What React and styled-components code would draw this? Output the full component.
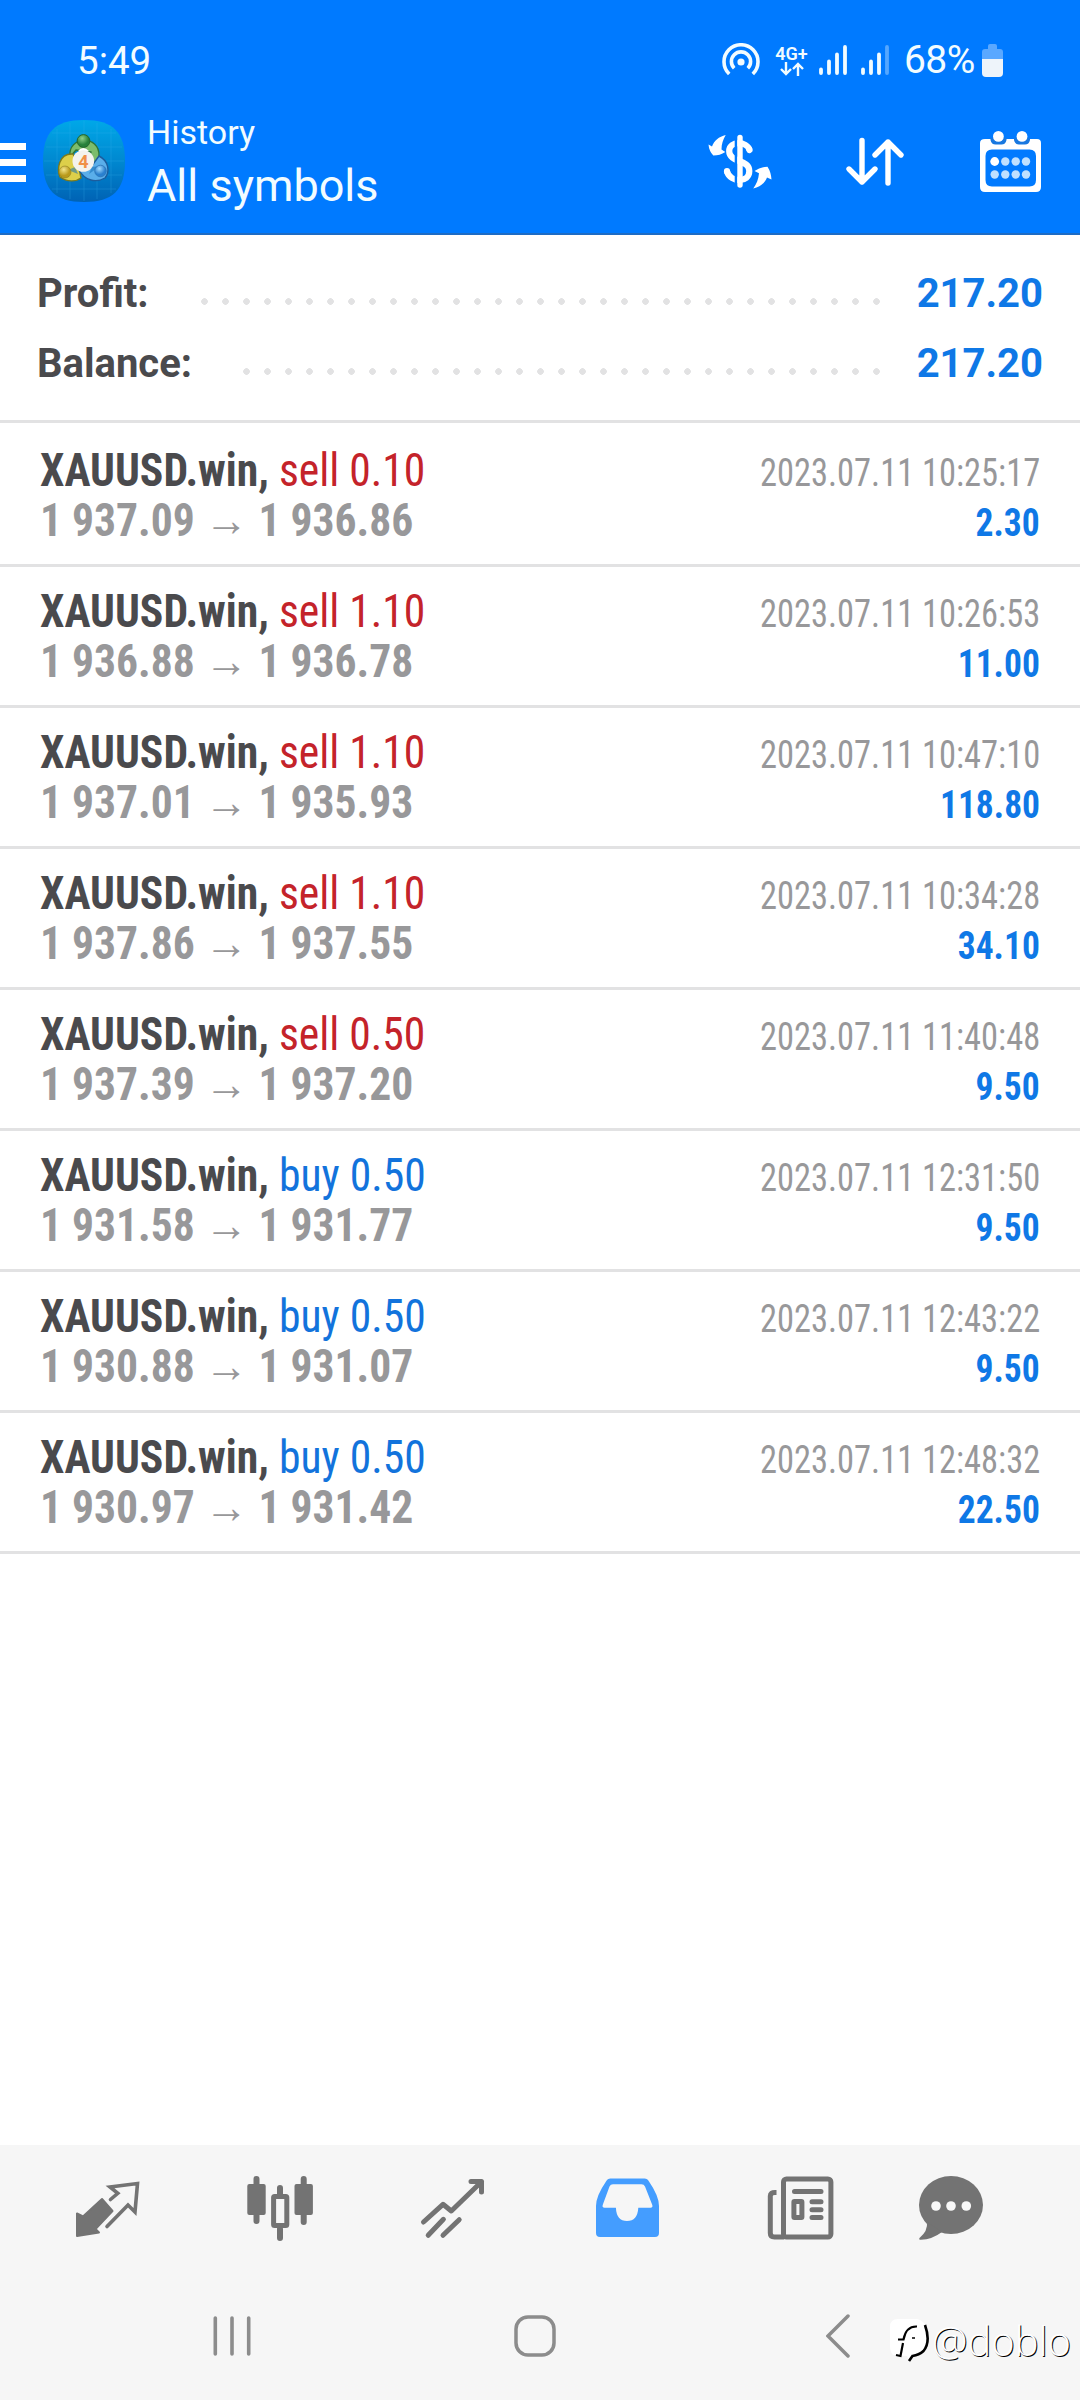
import React from "react";
import styled, { createGlobalStyle } from "styled-components";

const GlobalStyle = createGlobalStyle`
    * {
        box-sizing: border-box;
    }
    body {
        margin: 0;
        background: #fff;
    }
    svg {
        display: block;
        flex: none;
    }
`

const Screen = styled.div`
    width: 1080px;
    height: 2400px;
    display: flex;
    flex-direction: column;
    background: #fff;
    font-family: Roboto, sans-serif;
    overflow: hidden;
`

/* header */
const Header = styled.header`
    height: 235px;
    background: #007aff;
    border-bottom: 2px solid #1e6cc4;
    color: #f2fcff;
`
const StatusBar = styled.div`
    height: 109px;
    padding: 11px 77px 0;
    display: flex;
    justify-content: space-between;
    align-items: center;
    font-size: 38.5px;
`
const StatusIcons = styled.div`
    display: flex;
    align-items: center;
`
const Network = styled.div`
    width: 33px;
    margin: 0 11px 0 15px;
    display: flex;
    flex-direction: column;
    align-items: center;
    font-size: 18px;
    font-weight: 600;
    line-height: 17px;
    white-space: nowrap;
`
const Signal = styled.svg`
    margin-right: 14px;
`
const Percent = styled.span`
    width: 72px;
    margin-left: 1px;
    margin-right: 6px;
    font-size: 39px;
    letter-spacing: -0.6px;
    white-space: nowrap;
`
const AppBar = styled.div`
    height: 108px;
    padding-right: 38px;
    display: flex;
    align-items: center;
`
const MenuIcon = styled.svg`
    margin-bottom: 2px;
`
const Logo = styled.svg`
    margin: 0 22px 4px 17px;
`
const Titles = styled.div`
    flex: 1;
`
const Section = styled.div`
    font-size: 34px;
    line-height: 46px;
`
const Title = styled.div`
    font-size: 45px;
    line-height: 62px;
`
const Actions = styled.div`
    margin-bottom: 3px;
    display: flex;
    align-items: center;
    gap: 73px;
`

/* totals */
const Summary = styled.section`
    padding: 24px 37px 21px;
    border-bottom: 3px solid #e2e2e3;
`
const Total = styled.div`
    height: 70px;
    display: flex;
    align-items: center;
    font-size: 40px;
    font-weight: 700;
    line-height: 70px;
`
const TotalLabel = styled.span`
    width: ${props => props.width}px;
    color: #4a4a4d;
`
const Dots = styled.span`
    flex: 1;
    height: 7px;
    margin-top: 15px;
    background: radial-gradient(circle, #e2e2e3 3px, transparent 3.6px) 0 0 / 21px 7px repeat-x;
`
const TotalValue = styled.span`
    width: 161.5px;
    color: #0f78e6;
    text-align: right;
`

/* deals */
const Deals = styled.main`
    flex: 1;
    padding-top: 3px;
    font-family: 'Roboto Condensed', Roboto, sans-serif;
`
const Deal = styled.article`
    height: 141px;
    padding: 19px 40px 0;
    border-bottom: 3px solid #e2e2e3;
`
const Line = styled.div`
    height: 50px;
    display: flex;
    justify-content: space-between;
    align-items: baseline;
    line-height: 50px;
    white-space: nowrap;
`
const Symbol = styled.span`
    font-size: 46px;
    font-weight: 700;
    color: #4a4a4d;
    transform: scaleX(0.948);
    transform-origin: left;
`
const Side = styled.span`
    font-weight: 400;
    color: ${props => props.side === 'sell' ? '#c4232a' : '#1273dc'};
`
const Prices = styled.span`
    font-size: 46px;
    font-weight: 700;
    color: #98989a;
    transform: scaleX(0.947);
    transform-origin: left;
`
const Time = styled.span`
    font-size: 38px;
    color: #98989a;
    transform: scaleX(0.906);
    transform-origin: right;
`
const Profit = styled.span`
    font-size: 38px;
    font-weight: 700;
    color: #0f78e6;
    transform: scaleX(0.935);
    transform-origin: right;
`

/* bottom */
const TabBar = styled.nav`
    height: 126px;
    padding-left: 20px;
    display: flex;
    background: #f6f6f6;
`
const Tab = styled.div`
    width: ${props => props.width || 173.4}px;
    display: flex;
    justify-content: center;
    align-items: center;
    color: ${props => props.active ? '#449dff' : '#737373'};
`
const SystemBar = styled.div`
    position: relative;
    height: 129px;
    padding: 0 91px 0 81px;
    display: grid;
    grid-template-columns: repeat(3, 1fr);
    place-items: center;
    background: #f6f6f6;
`
const Watermark = styled.div`
    position: absolute;
    right: 9px;
    bottom: 32px;
    display: flex;
    align-items: center;
    font-family: 'Open Sans', sans-serif;
    font-size: 40px;
    font-weight: 300;
    line-height: 54px;
    color: #fff;
    text-shadow: 1px 1px 0 #000;
`

const LogoIcon = () => (
    <Logo width="82" height="82" viewBox="0 0 82 82">
        <defs>
            <linearGradient id="sky" x1="0" y1="0" x2="0" y2="1">
                <stop offset="0" stopColor="#00a8e8" />
                <stop offset="0.5" stopColor="#0088d0" />
                <stop offset="1" stopColor="#0062b4" />
            </linearGradient>
            <radialGradient id="green" cx="0.4" cy="0.3">
                <stop offset="0" stopColor="#8fd08a" />
                <stop offset="1" stopColor="#27803a" />
            </radialGradient>
            <radialGradient id="yellow" cx="0.4" cy="0.3">
                <stop offset="0" stopColor="#f3e58a" />
                <stop offset="1" stopColor="#b99a1c" />
            </radialGradient>
            <radialGradient id="blue" cx="0.4" cy="0.3">
                <stop offset="0" stopColor="#a4dcff" />
                <stop offset="1" stopColor="#2a80cf" />
            </radialGradient>
        </defs>
        <path d="M41 0C70 0 82 12 82 41S70 82 41 82S0 70 0 41S12 0 41 0Z" fill="url(#sky)" />
        <path d="M14 9V73M27 3V79M41 1V81M54 3V79M68 9V73M9 13H73M3 27H79M1 41H81M3 55H79M9 69H73" stroke="#3bb4f0" strokeWidth="0.7" opacity="0.35" />
        <g strokeLinejoin="round" strokeWidth="1.4">
            <path d="M27 37C24 16 57 14 56 36C55 43 50 46 44 46L48 32L33 30Z" fill="#7cbc6c" stroke="#2f7436" />
            <path d="M30 34C15 33 14 50 17 57C24 62 33 62 38 58L36 48Z" fill="#ddcf4a" stroke="#7c7a1c" />
            <path d="M56 36C66 41 67 52 62 58C53 63 42 61 36 50L48 47Z" fill="#5aaeea" stroke="#1c5c9c" />
        </g>
        <path d="M35 31Q40 25 46 31Z" fill="#fff" />
        <path d="M25 50L32 47L35 54ZM57 46L49 47L46 54Z" fill="#1470b8" opacity="0.55" />
        <circle cx="40.5" cy="21" r="6.4" fill="url(#green)" stroke="#23662e" />
        <circle cx="22" cy="52" r="6" fill="url(#yellow)" stroke="#8f7d20" strokeWidth="0.600" />
        <circle cx="57.5" cy="51" r="5.8" fill="url(#blue)" stroke="#2266a8" strokeWidth="0.600" />
        <circle cx="40.3" cy="41" r="10.8" fill="#f4f2ee" />
        <text x="40.3" y="47.500" textAnchor="middle" fontFamily="Roboto" fontSize="18" fontWeight="700" fill="#f09048">4</text>
    </Logo>
)

const Hotspot = () => (
    <svg width="38" height="34" viewBox="0 0 38 34" fill="none" stroke="currentColor" strokeWidth="3.6">
        <path d="M7.2 31A17 17 0 1 1 30.8 31" />
        <path d="M12.2 25.3A9.6 9.6 0 1 1 25.8 25.3" />
        <circle cx="19" cy="19" r="3.6" fill="currentColor" stroke="none" />
    </svg>
)

const Bars = ({ weak }) => (
    <Signal width="28" height="30" viewBox="0 0 28 30" stroke="currentColor" strokeWidth="3.8" strokeLinecap="round">
        <path d="M2 24.5V28M10 16.5V28M18 9.5V28" />
        <path d="M26 2V28" opacity={weak ? 0.35 : 1} />
    </Signal>
)

const Battery = () => (
    <svg width="21" height="33" viewBox="0 0 21 33">
        <path d="M6 5V2Q6 0 8 0H13Q15 0 15 2V5H18Q21 5 21 8V15H0V8Q0 5 3 5Z" fill="#5aa8ff" />
        <path d="M0 15H21V29Q21 33 17 33H4Q0 33 0 29Z" fill="#eef4fa" />
    </svg>
)

const Currency = () => (
    <svg width="64" height="56" viewBox="0 0 64 56" fill="#fff">
        <g fill="none" stroke="#fff" strokeWidth="6.2">
            <path d="M41.500 16C39 7 21.200 6.500 21.200 17C21.200 29 41.300 25 41.300 37C41.300 49 22.500 49 19 37.500" />
            <path d="M41.300 15.500L41.500 16M19 37.200V37.500" strokeLinecap="round" />
        </g>
        <path d="M28 3V52" stroke="#007aff" strokeWidth="2.600" />
        <path d="M32 3.500V51" stroke="#fff" strokeWidth="5.400" strokeLinecap="round" />
        <path d="M17.700 1C11 2.500 6 7 4 12.500L0.500 10.500Q1 17 5.300 21.500Q12 21.500 17.300 18L13.500 15.500C13.500 10 15 5.500 17.700 1Z" />
        <path d="M45.300 54.500C52 53 57 49 59 43.500L63.500 45.500Q63 38 59.500 32.700Q52.500 33 46.500 37L51 39.200C50.500 45 48.500 50 45.300 54.500Z" />
    </svg>
)

const Sort = () => (
    <svg width="62" height="50" viewBox="0 0 62 50" fill="none" stroke="#fff" strokeWidth="5.4" strokeLinecap="round" strokeLinejoin="round">
        <path d="M17 3.500V45M4 32L17 45L30 32" />
        <path d="M43 46V5M30 18L43 5L56 18" />
    </svg>
)

const Calendar = () => (
    <svg width="62" height="62" viewBox="0 0 62 62">
        <path fillRule="evenodd" fill="#fff" d="M5 8H57Q61 8 61 12V56Q61 61 56 61H5Q0 61 0 56V12Q0 8 5 8ZM12 18.500Q5.500 18.500 5.500 25V49Q5.500 55.500 12 55.500H49.500Q56 55.500 56 49V25Q56 18.500 49.500 18.500Z" />
        <path d="M10.500 7V9Q11.500 13.500 15.500 13.500H21.500Q25.500 13.500 26.500 9V7ZM34 7V9Q35 13.500 39 13.500H45Q49 13.500 50 9V7Z" fill="#1878e0" />
        <circle cx="18.400" cy="5.400" r="5.400" fill="#fff" />
        <circle cx="42" cy="5.400" r="5.400" fill="#fff" />
        <circle cx="14.700" cy="30.500" r="4.400" fill="#fff" />
        <g fill="#bfe0ff">
            <circle cx="25.300" cy="30.500" r="4.200" />
            <circle cx="35.700" cy="30.500" r="4.200" />
            <circle cx="46" cy="30.500" r="4.200" />
            <circle cx="14.700" cy="43.500" r="4.200" />
            <circle cx="25.300" cy="43.500" r="4.200" />
            <circle cx="35.700" cy="43.500" r="4.200" />
            <circle cx="46" cy="43.500" r="4.200" />
        </g>
    </svg>
)

const TabIcon = ({ children }) => (
    <svg width="72" height="72" viewBox="0 0 72 72" fill="currentColor" stroke="none">{children}</svg>
)

const QuotesIcon = () => (
    <TabIcon>
        <path d="M6 41.500V64L28 60.500L24.500 57L41.500 39L31 27L12 44.500Z" stroke="currentColor" strokeWidth="2" strokeLinejoin="round" />
        <path d="M39.500 27.500L46.800 21.300L39 15L66.500 11.500L64 40L57 33L36 54.500" fill="none" stroke="currentColor" strokeWidth="3.600" strokeLinecap="round" />
    </TabIcon>
)

const ChartIcon = () => (
    <TabIcon>
        <g stroke="currentColor" strokeWidth="6" strokeLinecap="round">
            <path d="M12.500 7V49M36 16V22M36 57V66M59.700 7V50" />
        </g>
        <rect x="3.300" y="12" width="18.400" height="31" rx="2" />
        <rect x="50.500" y="12" width="18.400" height="31" rx="2" />
        <rect x="29.600" y="24.500" width="13.200" height="29" rx="1" fill="none" stroke="currentColor" strokeWidth="5" />
    </TabIcon>
)

const TradeIcon = () => (
    <TabIcon>
        <g fill="none" stroke="currentColor" strokeWidth="5" strokeLinecap="round" strokeLinejoin="round">
            <path d="M6.500 50L26 32.300L34.300 39L64.500 9.700M54 9.500H64.500V20" />
            <path d="M26.400 47.300L11.200 63.300M42.200 47.700L26 63.300" />
        </g>
    </TabIcon>
)

const HistoryIcon = () => (
    <TabIcon>
        <path fillRule="evenodd" d="M19.500 6.500H53.500Q56.500 6.500 58 9.500Q68 24 68 34V61Q68 65 64 65H9Q5 65 5 61V34Q5 24 15 9.500Q16.500 6.500 19.500 6.500ZM22 12.300Q19.500 12.300 18.500 14.500L11.700 33Q11 35.700 13.500 35.700H24.900Q25.500 49 36 49Q46.500 49 47.300 35.700H59.500Q62 35.700 61.300 33L54 14.500Q53 12.300 50.500 12.300Z" />
    </TabIcon>
)

const NewsIcon = () => (
    <TabIcon>
        <g fill="none" stroke="currentColor" strokeWidth="5">
            <rect x="19.500" y="7" width="47.400" height="58" rx="3" />
            <path d="M12.500 20.500H11Q6.300 20.500 6.300 24V61Q6.300 65 10.500 65H20" />
            <rect x="29.900" y="29.500" width="8" height="16" rx="0.500" />
            <path d="M30.500 19.500H57M48 29.700H57M48 37.700H57M48 45.500H57" strokeLinecap="round" />
        </g>
    </TabIcon>
)

const ChatIcon = () => (
    <TabIcon>
        <ellipse cx="36" cy="33" rx="32" ry="29" />
        <path d="M12 50Q13 59 4.500 66Q3.500 68 6 67.800Q17 67.500 27 60Z" />
        <g fill="#f8f8f8">
            <circle cx="21" cy="34" r="4.800" />
            <circle cx="36" cy="34" r="4.800" />
            <circle cx="51.300" cy="34" r="4.800" />
        </g>
    </TabIcon>
)

const deals = [
    { side: 'sell', volume: '0.10', open: '1 937.09', close: '1 936.86', time: '2023.07.11 10:25:17', profit: '2.30' },
    { side: 'sell', volume: '1.10', open: '1 936.88', close: '1 936.78', time: '2023.07.11 10:26:53', profit: '11.00' },
    { side: 'sell', volume: '1.10', open: '1 937.01', close: '1 935.93', time: '2023.07.11 10:47:10', profit: '118.80' },
    { side: 'sell', volume: '1.10', open: '1 937.86', close: '1 937.55', time: '2023.07.11 10:34:28', profit: '34.10' },
    { side: 'sell', volume: '0.50', open: '1 937.39', close: '1 937.20', time: '2023.07.11 11:40:48', profit: '9.50' },
    { side: 'buy', volume: '0.50', open: '1 931.58', close: '1 931.77', time: '2023.07.11 12:31:50', profit: '9.50' },
    { side: 'buy', volume: '0.50', open: '1 930.88', close: '1 931.07', time: '2023.07.11 12:43:22', profit: '9.50' },
    { side: 'buy', volume: '0.50', open: '1 930.97', close: '1 931.42', time: '2023.07.11 12:48:32', profit: '22.50' },
]

const App = () => {
    return (
        <Screen>
            <GlobalStyle />
            <Header>
                <StatusBar>
                    <span>5:49</span>
                    <StatusIcons>
                        <Hotspot />
                        <Network>
                            4G+
                            <svg width="24" height="14" viewBox="0 0 24 14" fill="none" stroke="currentColor" strokeWidth="2.4">
                                <path d="M6 0V12M1 7L6 12L11 7M18 14V2M13 7L18 2L23 7" />
                            </svg>
                        </Network>
                        <Bars />
                        <Bars weak />
                        <Percent>68%</Percent>
                        <Battery />
                    </StatusIcons>
                </StatusBar>
                <AppBar>
                    <MenuIcon width="26" height="40" viewBox="0 0 26 40">
                        <path d="M0 4.500H26M0 20.500H26M0 36.500H26" stroke="#fff" strokeWidth="7" />
                    </MenuIcon>
                    <LogoIcon />
                    <Titles>
                        <Section>History</Section>
                        <Title>All symbols</Title>
                    </Titles>
                    <Actions>
                        <Currency />
                        <Sort />
                        <Calendar />
                    </Actions>
                </AppBar>
            </Header>
            <Summary>
                <Total>
                    <TotalLabel width={157}>Profit:</TotalLabel>
                    <Dots />
                    <TotalValue>217.20</TotalValue>
                </Total>
                <Total>
                    <TotalLabel width={199}>Balance:</TotalLabel>
                    <Dots />
                    <TotalValue>217.20</TotalValue>
                </Total>
            </Summary>
            <Deals>
                {deals.map(deal => (
                    <Deal key={deal.time}>
                        <Line>
                            <Symbol>XAUUSD.win, <Side side={deal.side}>{deal.side} {deal.volume}</Side></Symbol>
                            <Time>{deal.time}</Time>
                        </Line>
                        <Line>
                            <Prices>{deal.open} → {deal.close}</Prices>
                            <Profit>{deal.profit}</Profit>
                        </Line>
                    </Deal>
                ))}
            </Deals>
            <TabBar>
                <Tab><QuotesIcon /></Tab>
                <Tab><ChartIcon /></Tab>
                <Tab><TradeIcon /></Tab>
                <Tab active><HistoryIcon /></Tab>
                <Tab><NewsIcon /></Tab>
                <Tab width={128}><ChatIcon /></Tab>
            </TabBar>
            <SystemBar>
                <svg width="38" height="42" viewBox="0 0 38 42" stroke="#8c8c8c" strokeWidth="3.600" strokeLinecap="round">
                    <path d="M2.300 3V39M19 3V39M35.700 3V39" />
                </svg>
                <svg width="42" height="42" viewBox="0 0 42 42" fill="none" stroke="#8c8c8c" strokeWidth="3.500">
                    <rect x="2" y="2" width="38" height="38" rx="12" />
                </svg>
                <svg width="24" height="44" viewBox="0 0 24 44" fill="none" stroke="#8c8c8c" strokeWidth="3.500" strokeLinecap="round">
                    <path d="M22 2L2 22L22 42" />
                </svg>
                <Watermark>
                    <svg width="42" height="46" viewBox="0 0 42 46" fill="none">
                        <path d="M8 1H27Q37 3 37 17Q37 36 22 38L19 43L17 38L3 37Q0 34 0 28V9Q0 1 8 1Z" fill="#fff" />
                        <path d="M6 37L10.500 38L13 25M8 21.500H13.500Q16 8 27 8.500" stroke="#000" strokeWidth="2.200" />
                        <path d="M35 7Q41 24 33.500 33Q29 37 22.500 38L19 43" stroke="#000" strokeWidth="2.600" />
                        <path d="M22 20H25" stroke="#000" strokeWidth="1.500" />
                    </svg>
                    @doblo
                </Watermark>
            </SystemBar>
        </Screen>
    )
}

export default App;
